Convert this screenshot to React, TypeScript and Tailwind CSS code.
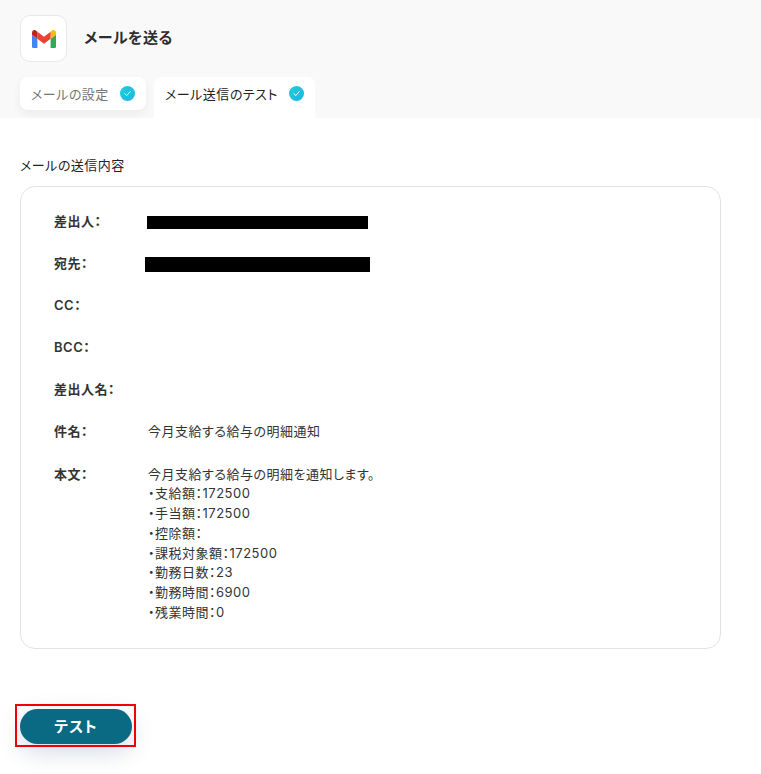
const bodyLines = [
  "今月支給する給与の明細を通知します。",
  "・支給額：172500",
  "・手当額：172500",
  "・控除額：",
  "・課税対象額：172500",
  "・勤務日数：23",
  "・勤務時間：6900",
  "・残業時間：0",
];

function CheckBadge() {
  return (
    <span className="flex h-[15px] w-[15px] items-center justify-center rounded-full bg-gradient-to-br from-[#1fd0d8] to-[#1cb4e8]">
      <svg width="9" height="9" viewBox="0 0 10 10" fill="none">
        <path d="M2 5.2 4.2 7.3 8 3" stroke="#ffffff" strokeWidth="1.1" strokeLinecap="round" strokeLinejoin="round" />
      </svg>
    </span>
  );
}

function GmailLogo() {
  return (
    <svg width="24" height="18" viewBox="0 0 24 18">
      <path d="M1.6 18H5.4V8.8L0 4.8V16.4C0 17.3.7 18 1.6 18Z" fill="#4285f4" />
      <path d="M18.6 18H22.4C23.3 18 24 17.3 24 16.4V4.8L18.6 8.8Z" fill="#34a853" />
      <path d="M18.6 1.8V8.8L24 4.8V2.4C24 .4 21.7-.7 20.2.5Z" fill="#fbbc04" />
      <path d="M5.4 8.8V1.8L12 6.7 18.6 1.8V8.8L12 13.7Z" fill="#ea4335" />
      <path d="M0 2.4V4.8L5.4 8.8V1.8L3.8.5C2.3-.7 0 .4 0 2.4Z" fill="#c5221f" />
    </svg>
  );
}

function Row({ label, value, children }: { label: string; value?: string; children?: React.ReactNode }) {
  return (
    <div className="flex h-[42.1px] items-start">
      <div className="w-[94px] shrink-0 font-semibold text-[#333333]">{label}</div>
      <div className="text-[#333333]">{value}{children}</div>
    </div>
  );
}

export default function App() {
  return (
    <div className="min-h-[774px] bg-white text-[13px] leading-[20px] tracking-[0.5px] text-[#2e2e2e] [font-family:Inter,'Noto_Sans_CJK_JP',sans-serif] [font-feature-settings:'palt']">
      <div className="h-[118px] bg-[#f9f9f9] pl-[20px] pt-[15px]">
        <div className="flex items-center gap-[17px]">
          <div className="flex h-[47px] w-[47px] items-center justify-center rounded-[10px] border border-[#e8e8e8] bg-white">
            <GmailLogo />
          </div>
          <div className="mt-[-1px] text-[15px] font-semibold text-[#2e2e2e]">メールを送る</div>
        </div>
        <div className="mt-[15px] flex items-start gap-[8px]">
          <div className="flex h-[33px] w-[126px] items-center justify-between rounded-[8px] bg-white pl-[11px] pr-[11px] text-[#757575] shadow-[0_4px_10px_rgba(0,0,0,0.06)]">
            <span>メールの設定</span>
            <CheckBadge />
          </div>
          <div className="flex h-[41px] w-[161px] items-start justify-between rounded-t-[8px] bg-white pl-[11px] pr-[11px] pt-[7px] text-[#222222]">
            <span>メール送信のテスト</span>
            <span className="mt-[2px]"><CheckBadge /></span>
          </div>
        </div>
      </div>

      <div className="px-[20px] pt-[37px]">
        <div className="text-[#222222]">メールの送信内容</div>
        <div className="mt-[11px] h-[463px] w-[701px] rounded-[15px] border border-[#e2e2e2] pl-[33px] pr-[34px] pt-[24px]">
          <Row label="差出人：">
            <div className="ml-[-1px] mt-[5px] h-[13px] w-[221px] bg-black" />
          </Row>
          <Row label="宛先：">
            <div className="ml-[-3px] mt-[4px] h-[15px] w-[225px] bg-black" />
          </Row>
          <Row label="CC：" />
          <Row label="BCC：" />
          <Row label="差出人名：" />
          <Row label="件名：" value="今月支給する給与の明細通知" />
          <div className="flex items-start">
            <div className="w-[94px] shrink-0 font-semibold text-[#333333]">本文：</div>
            <div className="text-[#333333]">
              {bodyLines.map((line) => (
                <div key={line} className="h-[19.75px]">{line}</div>
              ))}
            </div>
          </div>
        </div>
        <div className="relative mt-[60px] w-[112px]">
          <button className="h-[35px] w-[112px] rounded-full bg-[#0b6a83] text-[15px] font-bold tracking-[1px] text-white shadow-[0_8px_24px_rgba(40,70,110,0.2)]">
            テスト
          </button>
          <div className="pointer-events-none absolute left-[-5px] top-[-5px] h-[43px] w-[121px] border-2 border-[#f00000]" />
        </div>
      </div>
    </div>
  );
}
